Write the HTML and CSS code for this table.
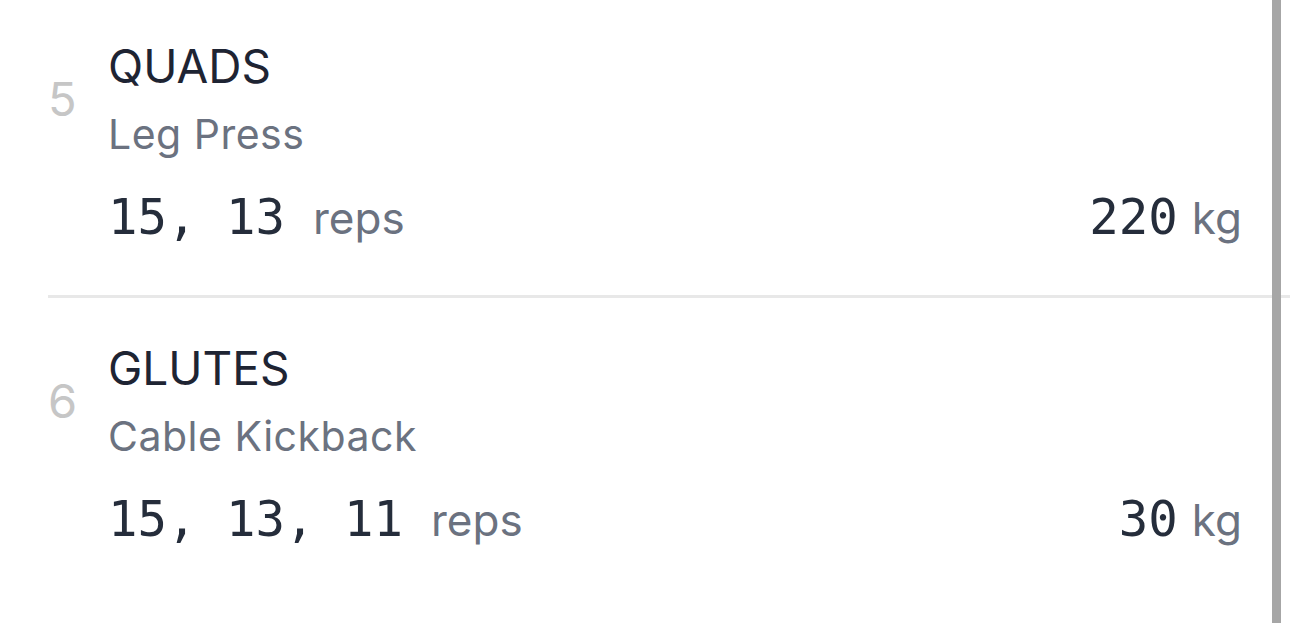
FILE: index.html
```html
<!DOCTYPE html>
<html lang="en">
<head>
  <meta charset="UTF-8" />
  <title>Workout</title>
  <link rel="stylesheet" href="styles.css">
</head>
<body>
  <div id="workout">
    <div class="exercise">
      <div class="index">5</div>
      <div class="details">
        <div class="muscle">QUADS</div>
        <div class="name">Leg Press</div>
        <div class="stats">
          <div class="reps"><span class="num">15, 13</span><span class="unit">reps</span></div>
          <div class="weight"><span class="num">220</span><span class="unit kg">kg</span></div>
        </div>
      </div>
    </div>
    <div class="exercise">
      <div class="index">6</div>
      <div class="details">
        <div class="muscle">GLUTES</div>
        <div class="name">Cable Kickback</div>
        <div class="stats">
          <div class="reps"><span class="num">15, 13, 11</span><span class="unit">reps</span></div>
          <div class="weight"><span class="num">30</span><span class="unit kg">kg</span></div>
        </div>
      </div>
    </div>
  </div>
  <div class="scroll-thumb"></div>
</body>
</html>
```

FILE: styles.css
```css
body {
  margin: 0;
  padding: 0;
  background-color: #fff;
  font-family: "Inter", "Noto Sans", sans-serif;
  height: 100vh;
  overflow: hidden;
  position: relative;
}

#workout {
  margin-top: -4px;
}

.exercise {
  display: flex;
  margin-left: 48px;
  padding: 40px 48px 47px 0;
  border-bottom: 3px solid #e8e8e8;
}

.exercise:last-child {
  border-bottom: none;
}

.index {
  width: 60px;
  flex-shrink: 0;
  margin-top: 33px;
  font-size: 47px;
  line-height: 60px;
  color: #c6c6c6;
}

.details {
  flex: 1;
}

.muscle {
  font-size: 46px;
  line-height: 60px;
  color: #1e2433;
}

.name {
  margin-top: 14px;
  font-size: 41px;
  line-height: 48px;
  letter-spacing: 0.5px;
  color: #6b7280;
}

.stats {
  display: flex;
  justify-content: space-between;
  align-items: baseline;
  margin-top: 30px;
}

.reps,
.weight {
  display: flex;
  align-items: baseline;
}

.num {
  font-family: "DejaVu Sans Mono", monospace;
  font-size: 49px;
  line-height: 60px;
  color: #252d3b;
}

.unit {
  margin-left: 28px;
  font-size: 44px;
  color: #6b7280;
}

.unit.kg {
  margin-left: 14px;
}

.scroll-thumb {
  position: absolute;
  top: 0;
  bottom: 0;
  right: 9px;
  width: 9px;
  background-color: #a6a6a6;
}
```
